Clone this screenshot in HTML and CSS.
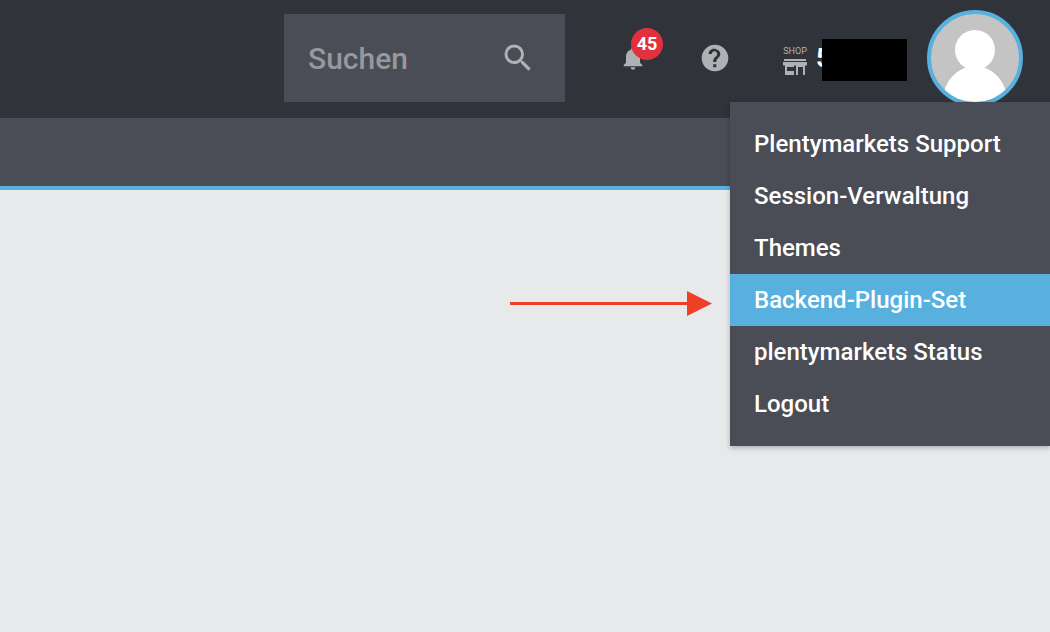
FILE: index.html
```html
<!DOCTYPE html>
<html lang="en">
<head>
    <meta charset="UTF-8">
    <meta name="viewport" content="width=device-width, initial-scale=1.0">
    <title>plentymarkets</title>
    <link rel="stylesheet" href="styles.css">
</head>
<body>
    <header class="topbar">
        <div class="search">
            <span class="search-label">Suchen</span>
            <svg class="search-icon" width="36" height="36" viewBox="0 0 24 24"><path d="M15.5 14h-.79l-.28-.27A6.47 6.47 0 0 0 16 9.5 6.5 6.5 0 1 0 9.5 16c1.61 0 3.09-.59 4.23-1.57l.27.28v.79l5 4.99L20.49 19l-4.99-5zm-6 0C7.01 14 5 11.99 5 9.5S7.01 5 9.5 5 14 7.01 14 9.5 11.99 14 9.5 14z"/></svg>
        </div>
        <div class="bell">
            <svg width="28" height="28" viewBox="0 0 24 24"><path d="M12 22c1.1 0 2-.9 2-2h-4c0 1.1.9 2 2 2zm6-6v-5c0-3.07-1.63-5.64-4.5-6.32V4c0-.83-.67-1.5-1.5-1.5s-1.5.67-1.5 1.5v.68C7.64 5.36 6 7.92 6 11v5l-2 2v1h16v-1l-2-2z"/></svg>
            <span class="badge">45</span>
        </div>
        <svg class="help" width="32" height="32" viewBox="0 0 24 24"><path d="M12 2C6.48 2 2 6.48 2 12s4.48 10 10 10 10-4.48 10-10S17.52 2 12 2zm1 17h-2.4v-2.4H13V19zm2.07-7.75l-.9.92C13.45 12.9 13 13.5 13 15h-2.4v-.5c0-1.1.45-2.1 1.17-2.83l1.24-1.26c.37-.36.59-.86.59-1.41 0-1.1-.9-2-2-2s-2 .9-2 2H7.2c0-2.21 1.79-4 4-4s4.8 1.79 4.8 4c0 .88-.36 1.68-.93 2.25z"/></svg>
        <div class="shop">
            <div class="shop-mark">
                <span class="shop-label">SHOP</span>
                <svg width="24" height="16" viewBox="0 0 24 16"><path fill-rule="evenodd" d="M1 0h22v2H1zM0 3h24v3.500H22V16H13V6.500H11V16H2V6.500H0zM4 8v4h7V8zM15 8v8h5V8z"/></svg>
            </div>
            <span class="shop-id">5</span>
            <span class="redacted"></span>
        </div>
        <div class="avatar">
            <span class="avatar-head"></span>
            <span class="avatar-body"></span>
        </div>
    </header>
    <div class="subbar"></div>

    <ul class="menu">
        <li>Plentymarkets Support</li>
        <li>Session-Verwaltung</li>
        <li>Themes</li>
        <li class="active">Backend-Plugin-Set</li>
        <li>plentymarkets Status</li>
        <li>Logout</li>
    </ul>

    <svg class="arrow" width="203" height="26" viewBox="0 0 203 26"><path d="M0 11h177V0l25 12.500L177 25V14H0z"/></svg>
</body>
</html>
```

FILE: styles.css
```css
html, body {
    margin: 0;
    height: 100%;
}

body {
    background: #e8e9eb;
    font-family: Roboto, "Liberation Sans", sans-serif;
    overflow: hidden;
}

.topbar {
    height: 118px;
    background: #31333b;
    display: flex;
    align-items: flex-start;
    padding-left: 284px;
    box-sizing: border-box;
}

.search {
    width: 281px;
    height: 88px;
    margin-top: 14px;
    background: #4a4c56;
    display: flex;
    align-items: center;
    justify-content: space-between;
    padding: 0 29px 0 24px;
    box-sizing: border-box;
}

.search-label {
    font-size: 30px;
    font-weight: 500;
    color: #97989e;
}

.search-icon {
    fill: #b0b1b5;
}

.bell {
    position: relative;
    width: 28px;
    height: 28px;
    margin: 44px 0 0 54px;
    fill: #b0b1b5;
}

.badge {
    position: absolute;
    left: 12px;
    top: -16px;
    width: 32px;
    height: 32px;
    border-radius: 50%;
    background: #e2303f;
    color: #fff;
    font-size: 18px;
    font-weight: 700;
    line-height: 32px;
    text-align: center;
}

.help {
    margin: 42px 0 0 52px;
    fill: #b0b1b5;
}

.shop {
    display: flex;
    align-items: flex-start;
    margin: 0 0 0 52px;
}

.shop-mark {
    display: flex;
    flex-direction: column;
    align-items: center;
    margin-top: 46px;
    fill: #b0b1b5;
}

.shop-label {
    font-size: 9px;
    line-height: 10px;
    color: #b0b1b5;
    margin-bottom: 3px;
}

.shop-id {
    width: 6px;
    margin: 44px 0 0 9px;
    font-size: 26px;
    font-weight: 700;
    line-height: 28px;
    color: #fff;
    overflow: hidden;
}

.redacted {
    width: 85px;
    height: 42px;
    margin-top: 39px;
    background: #000;
}

.avatar {
    position: relative;
    width: 96px;
    height: 96px;
    margin: 10px 0 0 20px;
    border: 4px solid #57b0de;
    border-radius: 50%;
    background: #c4c4c4;
    overflow: hidden;
    box-sizing: border-box;
}

.avatar-head {
    position: absolute;
    left: 24px;
    top: 16px;
    width: 40px;
    height: 40px;
    border-radius: 50%;
    background: #fff;
}

.avatar-body {
    position: absolute;
    left: 12px;
    top: 52px;
    width: 64px;
    height: 70px;
    border-radius: 50%;
    background: #fff;
}

.subbar {
    height: 68px;
    background: #4a4c56;
    border-bottom: 4px solid #57b0de;
}

.menu {
    position: absolute;
    left: 730px;
    top: 102px;
    width: 320px;
    margin: 0;
    padding: 16px 0;
    list-style: none;
    background: #4a4c56;
    box-shadow: 0 2px 5px rgba(0, 0, 0, 0.25);
}

.menu li {
    height: 52px;
    padding-left: 24px;
    font-size: 24px;
    font-weight: 500;
    line-height: 52px;
    color: #fff;
}

.menu li.active {
    background: #57b0de;
}

.arrow {
    position: absolute;
    left: 510px;
    top: 291px;
    fill: #ee4027;
}
```
